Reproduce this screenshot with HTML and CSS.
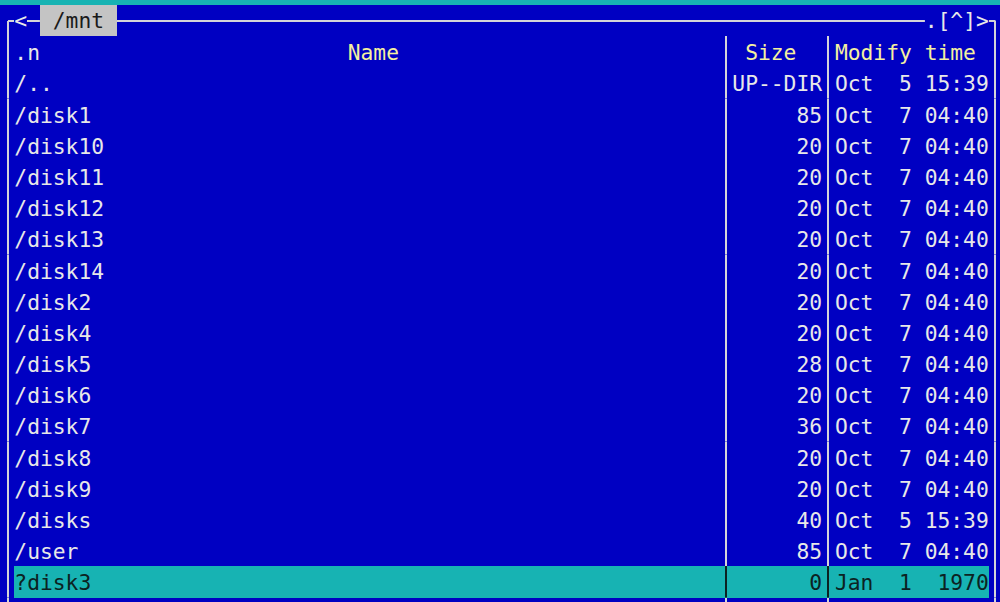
FILE: index.html
```html
<!DOCTYPE html>
<html lang="en">
<head>
    <meta charset="UTF-8">
    <title>mc - /mnt</title>
    <link rel="stylesheet" href="styles.css">
</head>
<body>

<div class="menubar"></div>

<div class="panel">
    <div class="titlebar">
        <span class="corner-l"></span><span class="txt">&lt;</span><span class="hline short"></span><span class="path"> /mnt </span><span class="hline"></span><span class="txt">.[^]&gt;</span><span class="corner-r"></span>
    </div>

    <div class="row head">
        <span class="edge"></span>
        <span class="name">.n                        <b>Name</b></span>
        <span class="sep"></span>
        <span class="size"><b> Size  </b></span>
        <span class="sep"></span>
        <span class="time"><b>Modify time</b></span>
        <span class="edge"></span>
    </div>

    <div class="row"><span class="edge"></span><span class="name">/..</span><span class="sep"></span><span class="size">UP--DIR</span><span class="sep"></span><span class="time">Oct  5 15:39</span><span class="edge"></span></div>
    <div class="row"><span class="edge"></span><span class="name">/disk1</span><span class="sep"></span><span class="size">85</span><span class="sep"></span><span class="time">Oct  7 04:40</span><span class="edge"></span></div>
    <div class="row"><span class="edge"></span><span class="name">/disk10</span><span class="sep"></span><span class="size">20</span><span class="sep"></span><span class="time">Oct  7 04:40</span><span class="edge"></span></div>
    <div class="row"><span class="edge"></span><span class="name">/disk11</span><span class="sep"></span><span class="size">20</span><span class="sep"></span><span class="time">Oct  7 04:40</span><span class="edge"></span></div>
    <div class="row"><span class="edge"></span><span class="name">/disk12</span><span class="sep"></span><span class="size">20</span><span class="sep"></span><span class="time">Oct  7 04:40</span><span class="edge"></span></div>
    <div class="row"><span class="edge"></span><span class="name">/disk13</span><span class="sep"></span><span class="size">20</span><span class="sep"></span><span class="time">Oct  7 04:40</span><span class="edge"></span></div>
    <div class="row"><span class="edge"></span><span class="name">/disk14</span><span class="sep"></span><span class="size">20</span><span class="sep"></span><span class="time">Oct  7 04:40</span><span class="edge"></span></div>
    <div class="row"><span class="edge"></span><span class="name">/disk2</span><span class="sep"></span><span class="size">20</span><span class="sep"></span><span class="time">Oct  7 04:40</span><span class="edge"></span></div>
    <div class="row"><span class="edge"></span><span class="name">/disk4</span><span class="sep"></span><span class="size">20</span><span class="sep"></span><span class="time">Oct  7 04:40</span><span class="edge"></span></div>
    <div class="row"><span class="edge"></span><span class="name">/disk5</span><span class="sep"></span><span class="size">28</span><span class="sep"></span><span class="time">Oct  7 04:40</span><span class="edge"></span></div>
    <div class="row"><span class="edge"></span><span class="name">/disk6</span><span class="sep"></span><span class="size">20</span><span class="sep"></span><span class="time">Oct  7 04:40</span><span class="edge"></span></div>
    <div class="row"><span class="edge"></span><span class="name">/disk7</span><span class="sep"></span><span class="size">36</span><span class="sep"></span><span class="time">Oct  7 04:40</span><span class="edge"></span></div>
    <div class="row"><span class="edge"></span><span class="name">/disk8</span><span class="sep"></span><span class="size">20</span><span class="sep"></span><span class="time">Oct  7 04:40</span><span class="edge"></span></div>
    <div class="row"><span class="edge"></span><span class="name">/disk9</span><span class="sep"></span><span class="size">20</span><span class="sep"></span><span class="time">Oct  7 04:40</span><span class="edge"></span></div>
    <div class="row"><span class="edge"></span><span class="name">/disks</span><span class="sep"></span><span class="size">40</span><span class="sep"></span><span class="time">Oct  5 15:39</span><span class="edge"></span></div>
    <div class="row"><span class="edge"></span><span class="name">/user</span><span class="sep"></span><span class="size">85</span><span class="sep"></span><span class="time">Oct  7 04:40</span><span class="edge"></span></div>
    <div class="row sel"><span class="edge"></span><span class="name">?disk3</span><span class="sep"></span><span class="size">0</span><span class="sep"></span><span class="time">Jan  1  1970</span><span class="edge"></span></div>
    <div class="row"><span class="edge"></span><span class="name"></span><span class="sep"></span><span class="size"></span><span class="sep"></span><span class="time"></span><span class="edge"></span></div>
</div>

</body>
</html>
```

FILE: styles.css
```css
body {
    margin: 0;
    height: 602px;
    overflow: hidden;
    background-color: #0000c2;
    font-family: "DejaVu Sans Mono", monospace;
    font-size: 21.3px;
    color: #e8e8e8;
}
.menubar {
    height: 5px;
    background-color: #17b3b3;
}
.panel {
    padding-left: 1.5px;
    width: 78ch;
}
.titlebar {
    display: flex;
    height: 31.2px;
    line-height: 31.2px;
    white-space: pre;
}
.corner-l, .corner-r {
    width: 1ch;
}
.corner-l {
    background:
        linear-gradient(#d4d4d8, #d4d4d8) right center / 50% 2px no-repeat,
        linear-gradient(#d4d4d8, #d4d4d8) center bottom / 2px 50% no-repeat;
}
.corner-r {
    background:
        linear-gradient(#d4d4d8, #d4d4d8) left center / 50% 2px no-repeat,
        linear-gradient(#d4d4d8, #d4d4d8) center bottom / 2px 50% no-repeat;
}
.hline {
    flex: 1;
    background: linear-gradient(#d4d4d8, #d4d4d8) center / 100% 2px no-repeat;
}
.hline.short {
    flex: none;
    width: 1ch;
}
.path {
    background-color: #c4c4c4;
    color: #1a1a1a;
}
.row {
    display: grid;
    grid-template-columns: 1ch 55ch 1ch 7ch 1ch 12ch 1ch;
    height: 31.2px;
}
.row span {
    box-sizing: border-box;
    height: 31.2px;
    padding-top: 2px;
    line-height: 29.2px;
    white-space: pre;
}
.edge, .sep {
    background: linear-gradient(#d4d4d8, #d4d4d8) center / 2px 100% no-repeat;
}
.size {
    text-align: right;
}
.head b {
    font-weight: normal;
    color: #f4f0a0;
}
.head .size {
    text-align: left;
}
.sel .name, .sel .size, .sel .time {
    background-color: #17b3b3;
    color: #0c2222;
}
.sel .sep {
    background: linear-gradient(#0c2222, #0c2222) center / 2px 100% no-repeat, #17b3b3;
}
```
